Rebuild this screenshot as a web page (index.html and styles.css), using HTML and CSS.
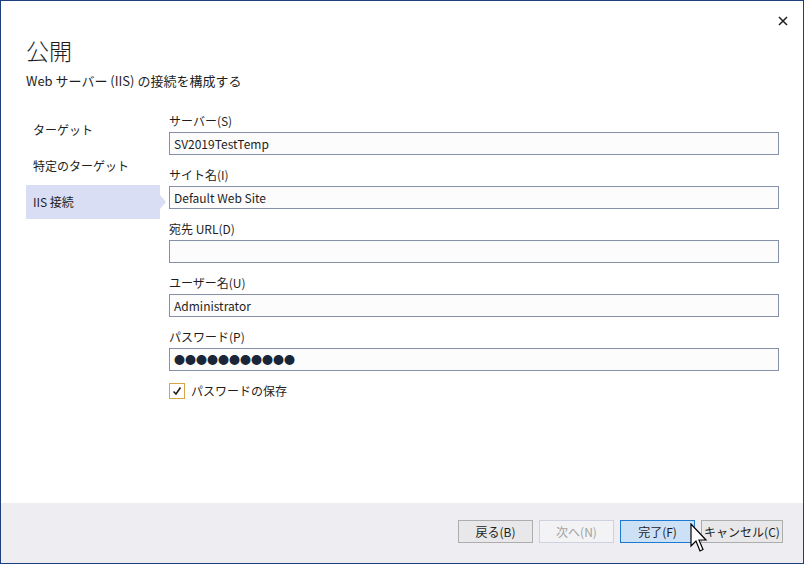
FILE: index.html
```html
<!DOCTYPE html>
<html lang="ja">
<head>
<meta charset="utf-8">
<link rel="stylesheet" href="styles.css">
</head>
<body>
<div class="window">
  <div class="main">
    <button class="close" aria-label="閉じる">
      <svg width="10" height="10" viewBox="0 0 10 10"><path d="M1 1 L9 9 M9 1 L1 9" stroke="#1e1e1e" stroke-width="1.5"/></svg>
    </button>
    <h1 class="title">公開</h1>
    <p class="subtitle">Web サーバー (IIS) の接続を構成する</p>
    <div class="body">
      <nav class="nav">
        <div class="nav-item">ターゲット</div>
        <div class="nav-item">特定のターゲット</div>
        <div class="nav-item selected">IIS 接続</div>
      </nav>
      <div class="form">
        <div class="field">
          <div class="label">サーバー(S)</div>
          <div class="input">SV2019TestTemp</div>
        </div>
        <div class="field">
          <div class="label">サイト名(I)</div>
          <div class="input">Default Web Site</div>
        </div>
        <div class="field">
          <div class="label">宛先 URL(D)</div>
          <div class="input"></div>
        </div>
        <div class="field">
          <div class="label">ユーザー名(U)</div>
          <div class="input">Administrator</div>
        </div>
        <div class="field">
          <div class="label">パスワード(P)</div>
          <div class="input password">●●●●●●●●●●●</div>
        </div>
        <div class="check-row">
          <span class="checkbox">
            <svg width="12" height="12" viewBox="0 0 12 12"><path d="M2.5 6.5 L5 9 L9.5 2.5" fill="none" stroke="#1e1e1e" stroke-width="1.6"/></svg>
          </span>
          <span class="check-label">パスワードの保存</span>
        </div>
      </div>
    </div>
  </div>
  <div class="footer">
    <button class="btn">戻る(B)</button>
    <button class="btn disabled">次へ(N)</button>
    <button class="btn primary">完了(F)</button>
    <button class="btn wide">キャンセル(C)</button>
    <svg class="cursor" width="20" height="32" viewBox="0 0 20 32">
      <path d="M1 1 L1 23 L6 18 L10 28 L13 26.5 L9 17 L16 17 Z" fill="#ffffff" stroke="#000000" stroke-width="1.2" stroke-linejoin="miter"/>
    </svg>
  </div>
</div>
</body>
</html>
```

FILE: styles.css
```css
html, body {
  margin: 0;
  padding: 0;
}
body {
  width: 804px;
  height: 564px;
  overflow: hidden;
  font-family: "Noto Sans CJK JP", sans-serif;
  font-size: 12px;
  color: #1e1e1e;
  background: #ffffff;
}
.window {
  box-sizing: border-box;
  width: 804px;
  height: 564px;
  border: 1px solid #1e3f7e;
  display: flex;
  flex-direction: column;
  position: relative;
}
.main {
  flex: 1;
  background: #ffffff;
  padding: 0 24px 0 25px;
  position: relative;
}
.close {
  position: absolute;
  top: 14px;
  right: 14px;
  width: 12px;
  height: 12px;
  padding: 0;
  border: 0;
  background: transparent;
  display: flex;
  align-items: center;
  justify-content: center;
}
.title {
  margin: 34px 0 0 0;
  font-size: 23px;
  font-weight: 300;
  line-height: 30px;
  color: #1e1e1e;
}
.subtitle {
  margin: 6px 0 0 0;
  font-size: 13px;
  line-height: 20px;
  color: #1e1e1e;
}
.body {
  display: flex;
  margin-top: 21px;
}
.nav {
  width: 134px;
  display: flex;
  flex-direction: column;
  gap: 2px;
  padding-top: 1px;
}
.nav-item {
  height: 34px;
  line-height: 34px;
  padding-left: 7px;
  position: relative;
}
.nav-item.selected {
  background: #dadef5;
}
.nav-item.selected::after {
  content: "";
  position: absolute;
  right: -6px;
  top: 10px;
  border-left: 6px solid #dadef5;
  border-top: 7px solid transparent;
  border-bottom: 7px solid transparent;
}
.form {
  flex: 1;
  margin-left: 9px;
  display: flex;
  flex-direction: column;
}
.field {
  display: flex;
  flex-direction: column;
  margin-bottom: 11px;
}
.label {
  height: 18px;
  line-height: 18px;
  margin-bottom: 2px;
}
.input {
  box-sizing: border-box;
  height: 23px;
  line-height: 21px;
  border: 1px solid #8491a9;
  background: #fcfcfc;
  padding-left: 4px;
  white-space: nowrap;
}
.input.password {
  font-size: 11px;
  letter-spacing: 0;
  color: #1b2538;
  line-height: 21px;
}
.check-row {
  display: flex;
  align-items: center;
  margin-top: 1px;
  gap: 6px;
}
.checkbox {
  box-sizing: border-box;
  width: 16px;
  height: 16px;
  border: 1px solid #d9a446;
  display: flex;
  align-items: center;
  justify-content: center;
  background: #ffffff;
}
.check-label {
  line-height: 16px;
}
.footer {
  height: 60px;
  background: #eeeef2;
  display: flex;
  justify-content: flex-end;
  align-items: flex-start;
  padding: 17px 20px 0 0;
  box-sizing: border-box;
  gap: 6px;
  position: relative;
}
.btn {
  box-sizing: border-box;
  width: 75px;
  height: 23px;
  padding: 0;
  font-family: "Noto Sans CJK JP", sans-serif;
  font-size: 12px;
  color: #1e1e1e;
  background: #e8e8ea;
  border: 1px solid #adadad;
  line-height: 21px;
}
.btn.disabled {
  background: #f3f3f5;
  border-color: #ced2e0;
  color: #a2a2a2;
}
.btn.primary {
  background: #cce0f6;
  border-color: #1d7ad3;
}
.btn.wide {
  width: 82px;
}
.cursor {
  position: absolute;
  left: 689px;
  top: 20px;
}
```
